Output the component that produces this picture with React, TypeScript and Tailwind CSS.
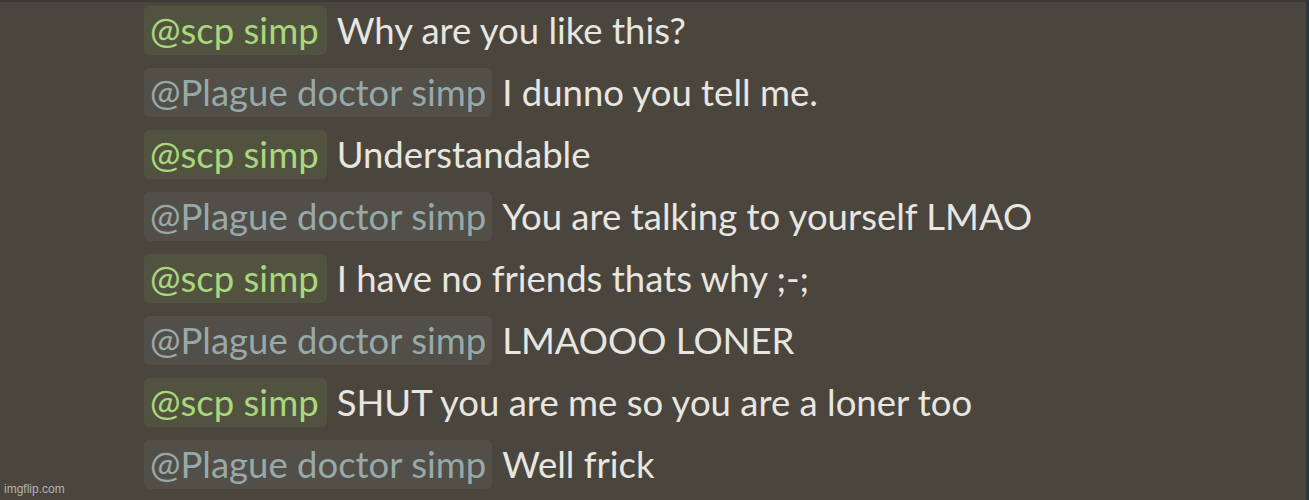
import React from "react";

type Line = { who: "scp" | "plague"; text: string };

const lines: Line[] = [
  { who: "scp", text: "Why are you like this?" },
  { who: "plague", text: "I dunno you tell me." },
  { who: "scp", text: "Understandable" },
  { who: "plague", text: "You are talking to yourself LMAO" },
  { who: "scp", text: "I have no friends thats why ;-;" },
  { who: "plague", text: "LMAOOO LONER" },
  { who: "scp", text: "SHUT you are me so you are a loner too" },
  { who: "plague", text: "Well frick" },
];

const Mention: React.FC<{ who: Line["who"] }> = ({ who }) =>
  who === "scp" ? (
    <span className="flex h-[49px] items-center rounded-[5px] bg-[#515340] pl-[6px] pr-[8px] text-[#a9d77b]">
      @scp simp
    </span>
  ) : (
    <span className="flex h-[49px] items-center rounded-[5px] bg-[#524e48] px-[6px] text-[#98a9aa]">
      @Plague doctor simp
    </span>
  );

export default function App() {
  return (
    <div
      className="relative h-[500px] w-[1309px] overflow-hidden border-t-2 border-r-[3px] border-t-[#3a3a37] border-r-[#2c3640] bg-[#4a453d]"
      style={{ fontFamily: "Lato, 'Open Sans', sans-serif" }}
    >
      <div className="flex flex-col gap-[13px] pl-[144px] pt-[4px]">
        {lines.map((l, i) => (
          <div key={i} className="flex items-center gap-[10px] text-[36.5px] leading-none">
            <Mention who={l.who} />
            <span className="text-[#e8e6e1]">{l.text}</span>
          </div>
        ))}
      </div>
      <span
        className="absolute bottom-[2px] left-[4px] text-[12px] text-[#b5b3ae]"
        style={{ fontFamily: "Arial, 'Liberation Sans', sans-serif" }}
      >
        imgflip.com
      </span>
    </div>
  );
}
